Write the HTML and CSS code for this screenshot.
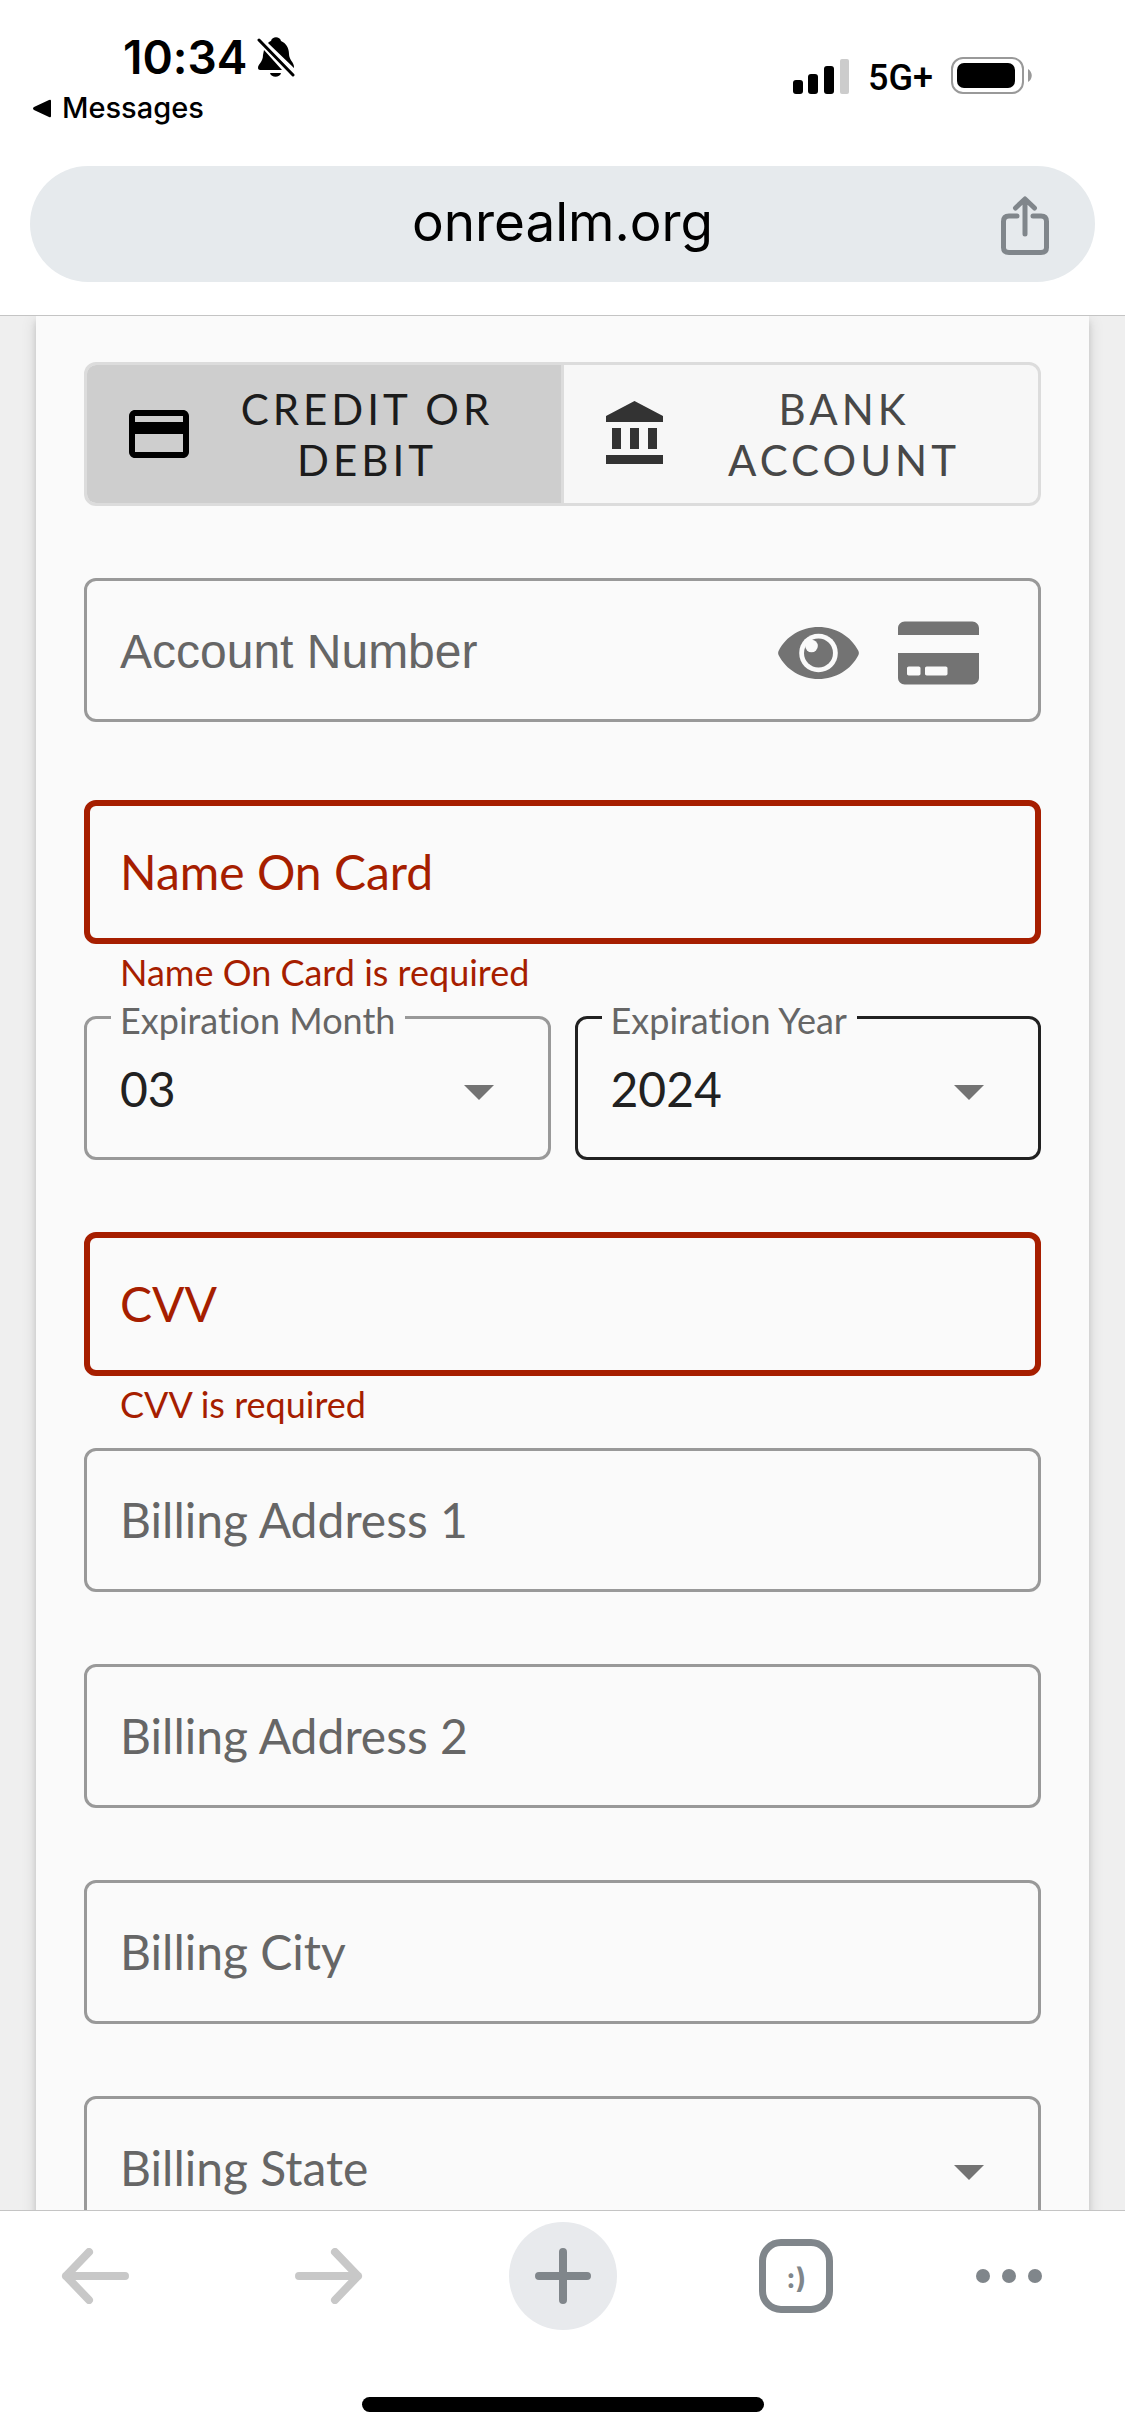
FILE: index.html
```html
<!DOCTYPE html>
<html lang="en">
  <head>
    <meta charset="utf-8">
    <meta name="viewport" content="width=device-width, initial-scale=1">
    <title>onrealm.org</title>
    <link rel="stylesheet" href="styles.css">
  </head>
  <body>
    <header class="top">
      <div class="status-bar">
        <div class="status-left">
          <div class="clock">
            <span>10:34</span>
            <svg class="bell" width="38" height="40" viewBox="0 0 38 40">
              <path d="M1 31c0-4 5-6 5-13l1-5 18 20H3c-1 0-2-1-2-2z" />
              <path d="M11 6c1-1 2-2 3-2 1-5 9-5 10 0 5 2 8 7 8 13s5 8 5 13v1z" />
              <path d="M13 36h11c-1 5-10 5-11 0z" />
              <path class="slash" d="M2 3l34 35" />
            </svg>
          </div>
          <a class="back-link" href="#">
            <svg width="19" height="19" viewBox="0 0 19 19">
              <path d="M1 8L16 1q2-1 2 1v15q0 2-2 1L1 11q-2-1.500 0-3z" />
            </svg>
            Messages
          </a>
        </div>
        <div class="status-right">
          <svg width="57" height="36" viewBox="0 0 57 36">
            <rect x="0" y="22" width="10" height="14" rx="3" />
            <rect x="15" y="16" width="10" height="20" rx="3" />
            <rect x="31" y="8" width="10" height="28" rx="3" />
            <rect x="47" y="1" width="9" height="35" rx="2" fill="#ccc" />
          </svg>
          <span class="network">5G+</span>
          <svg width="82" height="38" viewBox="0 0 82 38">
            <rect x="1" y="1" width="71" height="35" rx="11" fill="none" stroke="#999" stroke-width="2" />
            <rect x="6" y="6" width="58" height="25" rx="7" />
            <path d="M77 12c5 3 5 10 0 13z" fill="#999" />
          </svg>
        </div>
      </div>
      <div class="address-bar">
        <span class="url">onrealm.org</span>
        <button class="share" type="button" aria-label="Share">
          <svg width="48" height="60" viewBox="0 0 48 60">
            <path d="M16 20H8q-5.500 0-5.500 5.500v26q0 5 5.500 5h32q5.500 0 5.500-5v-26Q45.500 20 40 20h-8M24 38V4M14.500 12L24 3l9.500 9" />
          </svg>
        </button>
      </div>
    </header>

    <main class="page">
      <form class="card">
        <div class="toggle">
          <button class="toggle-btn active" type="button">
            <svg width="72" height="72" viewBox="0 0 24 24">
              <path d="M20 4H4c-1.110 0-1.990.890-1.990 2L2 18c0 1.110.890 2 2 2h16c1.110 0 2-.890 2-2V6c0-1.110-.890-2-2-2zm0 14H4v-6h16v6zm0-10H4V6h16v2z" />
            </svg>
            <span>CREDIT OR DEBIT</span>
          </button>
          <button class="toggle-btn" type="button">
            <svg width="72" height="72" viewBox="0 0 24 24">
              <path d="M4 10v7h3v-7H4zm6 0v7h3v-7h-3zM2 22h19v-3H2v3zm14-12v7h3v-7h-3zm-4.500-9L2 6v2h19V6l-9.500-5z" />
            </svg>
            <span>BANK ACCOUNT</span>
          </button>
        </div>

        <div class="field account">
          <label for="account">Account Number</label>
          <input id="account" type="text">
          <div class="field-icons">
            <svg width="81" height="52" viewBox="0 0 81 52">
              <path d="M.8 23.500C8 9.500 23 0 40.500 0s32.500 9.500 39.700 23.500c.9 1.700.9 3.300 0 5C73 42.500 58 52 40.500 52S8 42.500.8 28.500c-.9-1.700-.9-3.300 0-5z" />
              <circle cx="40.500" cy="26" r="19.300" fill="#fafafa" />
              <circle cx="40.500" cy="26" r="14.500" />
              <circle cx="33.500" cy="19" r="6.300" fill="#fafafa" />
            </svg>
            <svg width="81" height="72" viewBox="0 0 576 512">
              <path d="M0 432c0 26.500 21.500 48 48 48h480c26.500 0 48-21.500 48-48V256H0v176zm192-68c0-6.600 5.400-12 12-12h136c6.600 0 12 5.400 12 12v40c0 6.600-5.400 12-12 12H204c-6.600 0-12-5.400-12-12v-40zm-128 0c0-6.600 5.400-12 12-12h72c6.600 0 12 5.400 12 12v40c0 6.600-5.400 12-12 12H76c-6.600 0-12-5.400-12-12v-40zM576 80v48H0V80c0-26.500 21.500-48 48-48h480c26.500 0 48 21.500 48 48z" />
            </svg>
          </div>
        </div>

        <div class="field invalid">
          <label for="name">Name On Card</label>
          <input id="name" type="text" aria-describedby="name-error">
        </div>
        <p class="error" id="name-error">Name On Card is required</p>

        <div class="row">
          <div class="field">
            <label class="floating" for="month">Expiration Month</label>
            <select id="month">
              <option>01</option>
              <option>02</option>
              <option selected>03</option>
              <option>04</option>
            </select>
            <svg class="arrow" width="72" height="72" viewBox="0 0 24 24"><path d="M7 11l5 5 5-5z" /></svg>
          </div>
          <div class="field hovered">
            <label class="floating" for="year">Expiration Year</label>
            <select id="year">
              <option selected>2024</option>
              <option>2025</option>
              <option>2026</option>
            </select>
            <svg class="arrow" width="72" height="72" viewBox="0 0 24 24"><path d="M7 11l5 5 5-5z" /></svg>
          </div>
        </div>

        <div class="field invalid">
          <label for="cvv">CVV</label>
          <input id="cvv" type="text" aria-describedby="cvv-error">
        </div>
        <p class="error" id="cvv-error">CVV is required</p>

        <div class="field">
          <label for="address1">Billing Address 1</label>
          <input id="address1" type="text">
        </div>
        <div class="field">
          <label for="address2">Billing Address 2</label>
          <input id="address2" type="text">
        </div>
        <div class="field">
          <label for="city">Billing City</label>
          <input id="city" type="text">
        </div>
        <div class="field">
          <label for="state">Billing State</label>
          <select id="state">
            <option selected></option>
          </select>
          <svg class="arrow" width="72" height="72" viewBox="0 0 24 24"><path d="M7 11l5 5 5-5z" /></svg>
        </div>
      </form>
    </main>

    <footer class="bottom">
      <nav class="toolbar">
        <button class="tool dim" type="button" aria-label="Back">
          <svg width="68" height="56" viewBox="0 0 68 56"><path d="M64 28H5M28 4L5 28l23 24" /></svg>
        </button>
        <button class="tool dim" type="button" aria-label="Forward">
          <svg width="68" height="56" viewBox="0 0 68 56"><path d="M4 28h59M40 4l23 24-23 24" /></svg>
        </button>
        <button class="tool new-tab" type="button" aria-label="New tab">
          <svg width="56" height="56" viewBox="0 0 56 56"><path d="M28 4v48M4 28h48" /></svg>
        </button>
        <button class="tool" type="button">
          <span class="tabs">:)</span>
        </button>
        <button class="tool menu" type="button" aria-label="Menu">
          <svg class="dots" width="68" height="16" viewBox="0 0 68 16">
            <circle cx="7" cy="8" r="7" />
            <circle cx="33" cy="8" r="7" />
            <circle cx="59" cy="8" r="7" />
          </svg>
        </button>
      </nav>
      <div class="home-indicator"></div>
    </footer>
  </body>
</html>
```

FILE: styles.css
```css
* {
  box-sizing: border-box;
}

body {
  margin: 0;
  height: 100vh;
  display: flex;
  flex-direction: column;
  overflow: hidden;
  background-color: #fff;
  font-family: Lato, sans-serif;
  font-variant-ligatures: none;
}

svg {
  display: block;
  flex: none;
}

button {
  padding: 0;
  border: none;
  background: none;
  font-family: inherit;
  cursor: pointer;
}

/* Status bar and address bar */
.top {
  flex: none;
  padding-bottom: 33px;
  border-bottom: 1px solid #c4c4c4;
  font-family: Inter, sans-serif;
}

.status-bar {
  display: flex;
  justify-content: space-between;
  height: 166px;
  padding: 27px 92px 0 33px;
}

.clock {
  display: flex;
  align-items: center;
  gap: 10px;
  padding-left: 90px;
  font-size: 46px;
  line-height: 60px;
  font-weight: 600;
}

.bell .slash {
  stroke: #000;
  stroke-width: 3;
  stroke-linecap: round;
}

.back-link {
  display: flex;
  align-items: center;
  gap: 10px;
  font-size: 29px;
  line-height: 42px;
  font-weight: 500;
  color: #000;
  text-decoration: none;
}

.status-right {
  display: flex;
  align-items: center;
  gap: 18px;
  height: 98px;
}

.network {
  padding-top: 4px;
  font-family: Roboto, sans-serif;
  font-size: 36px;
  font-weight: 500;
}

.address-bar {
  display: grid;
  grid-template-columns: 1fr auto 1fr;
  align-items: center;
  height: 116px;
  margin: 0 30px;
  padding: 0 46px;
  border-radius: 58px;
  background-color: #e6eaed;
}

.url {
  grid-column: 2;
  font-size: 53px;
  line-height: 64px;
  padding-bottom: 4px;
}

.share {
  justify-self: end;
  padding-top: 4px;
}

.share path {
  fill: none;
  stroke: #80868b;
  stroke-width: 5;
  stroke-linecap: round;
  stroke-linejoin: round;
}

/* Payment form */
.page {
  flex: 1;
  min-height: 0;
  overflow: hidden;
  padding: 0 36px;
  background-color: #efefef;
}

.card {
  padding: 46px 48px;
  background-color: #fafafa;
  box-shadow: 0 6px 6px rgba(0, 0, 0, 0.12), 0 3px 15px rgba(0, 0, 0, 0.12);
}

.toggle {
  display: flex;
  margin-bottom: 72px;
  border: 3px solid #dcdcdc;
  border-radius: 12px;
  background-color: #f7f7f7;
  overflow: hidden;
}

.toggle-btn {
  flex: 1;
  display: flex;
  align-items: center;
  gap: 14px;
  height: 138px;
  padding: 0 36px;
  font-size: 42px;
  line-height: 51px;
  letter-spacing: 4px;
  color: #484848;
}

.toggle-btn + .toggle-btn {
  border-left: 3px solid #dcdcdc;
}

.toggle-btn span {
  flex: 1;
  padding-top: 2px;
}

.toggle-btn svg {
  fill: #333;
}

.toggle-btn.active {
  background-color: #cecece;
  color: #1c1c1c;
}

.toggle-btn.active svg {
  fill: #000;
}

/* The label and the control share one grid cell */
.field {
  display: grid;
  position: relative;
  align-items: center;
  height: 144px;
  margin-bottom: 72px;
  border: 3px solid #999;
  border-radius: 12px;
  font-size: 48px;
  line-height: 58px;
  color: #666;
}

.field > * {
  grid-area: 1 / 1;
}

.field label {
  padding: 0 33px;
  pointer-events: none;
}

.field input,
.field select {
  width: 100%;
  height: 100%;
  padding: 0 33px;
  border: none;
  outline: none;
  appearance: none;
  background: none;
  font-family: inherit;
  font-size: 48px;
  color: #212121;
}

.field.account {
  margin-bottom: 78px;
  font-family: "Liberation Sans", Arial, sans-serif;
}

.field.account label {
  padding-top: 4px;
}

.field-icons {
  justify-self: end;
  display: flex;
  align-items: center;
  gap: 39px;
  padding: 6px 59px 0 0;
  fill: #737373;
}

.field.invalid {
  margin-bottom: 0;
  border: 6px solid #a61e00;
  color: #a61e00;
}

.field.invalid label {
  padding: 0 30px;
}

.field.hovered {
  border-color: #212121;
}

.error {
  height: 72px;
  margin: 0;
  padding-left: 36px;
  font-size: 36px;
  line-height: 56px;
  color: #a61e00;
}

.row {
  display: flex;
  gap: 24px;
}

.row .field {
  flex: 1;
}

/* Label sitting over the top border */
.field label.floating {
  position: absolute;
  top: -21px;
  left: 24px;
  padding: 0 10px 0 9px;
  background-color: #fafafa;
  font-size: 36px;
  line-height: 44px;
}

.arrow {
  justify-self: end;
  margin-right: 33px;
  fill: #737373;
  pointer-events: none;
}

/* Browser toolbar */
.bottom {
  flex: none;
  padding: 11px 0 24px;
  border-top: 1px solid #c4c4c4;
}

.toolbar {
  display: flex;
  justify-content: space-between;
  padding: 0 41px;
}

.tool {
  display: flex;
  align-items: center;
  justify-content: center;
  width: 108px;
  height: 108px;
  color: #80868b;
}

.tool path {
  fill: none;
  stroke: currentColor;
  stroke-width: 8;
  stroke-linecap: round;
  stroke-linejoin: round;
}

.tool.dim {
  color: #c8c8c8;
}

.tool.new-tab {
  border-radius: 50%;
  background-color: #e8eaed;
}

.tool.menu {
  justify-content: flex-start;
}

.dots {
  fill: #80868b;
}

.tabs {
  width: 74px;
  height: 74px;
  border: 7px solid #80868b;
  border-radius: 22px;
  font-family: Inter, sans-serif;
  font-size: 28px;
  font-weight: 700;
  line-height: 64px;
}

.home-indicator {
  width: 402px;
  height: 15px;
  margin: 67px auto 0;
  border-radius: 8px;
  background-color: #000;
}
```
